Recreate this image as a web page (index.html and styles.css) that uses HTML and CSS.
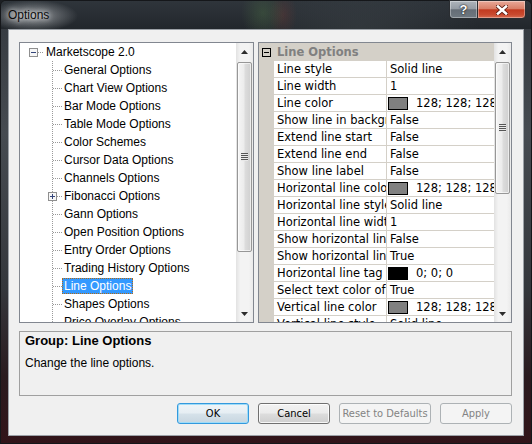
FILE: index.html
```html
<!DOCTYPE html>
<html>
<head>
<meta charset="utf-8">
<title>Options</title>
<link rel="stylesheet" href="styles.css">
</head>
<body>
<div class="window">
  <div class="titlebar">
    <span class="title">Options</span>
    <div class="caption-btns">
      <span class="cap help">?</span>
      <span class="cap close"><svg width="12" height="10" viewBox="0 0 12 10"><path d="M2 1.5L10 8.5M10 1.5L2 8.5" stroke="#5a1a10" stroke-width="4.2" stroke-linecap="square"/><path d="M2 1.5L10 8.5M10 1.5L2 8.5" stroke="#ffffff" stroke-width="2.6" stroke-linecap="square"/></svg></span>
    </div>
  </div>
  <div class="client">
    <div class="panels">
      <div class="tree">
        <div class="tree-body">
          <div class="node root"><svg class="exp" width="9" height="9" viewBox="0 0 9 9"><rect x="0.5" y="0.5" width="8" height="8" fill="#f6f6f6" stroke="#8f8f8f"/><path d="M2 4.5h5" stroke="#34457a"/></svg><span class="conn root-conn"></span><span class="label">Marketscope 2.0</span></div>
          <div class="children">
            <div class="node child"><span class="conn"></span><span class="label">General Options</span></div>
            <div class="node child"><span class="conn"></span><span class="label">Chart View Options</span></div>
            <div class="node child"><span class="conn"></span><span class="label">Bar Mode Options</span></div>
            <div class="node child"><span class="conn"></span><span class="label">Table Mode Options</span></div>
            <div class="node child"><span class="conn"></span><span class="label">Color Schemes</span></div>
            <div class="node child"><span class="conn"></span><span class="label">Cursor Data Options</span></div>
            <div class="node child"><span class="conn"></span><span class="label">Channels Options</span></div>
            <div class="node child"><svg class="exp exp-child" width="9" height="9" viewBox="0 0 9 9"><rect x="0.5" y="0.5" width="8" height="8" fill="#f6f6f6" stroke="#8f8f8f"/><path d="M2 4.5h5M4.5 2v5" stroke="#34457a"/></svg><span class="conn short"></span><span class="label">Fibonacci Options</span></div>
            <div class="node child"><span class="conn"></span><span class="label">Gann Options</span></div>
            <div class="node child"><span class="conn"></span><span class="label">Open Position Options</span></div>
            <div class="node child"><span class="conn"></span><span class="label">Entry Order Options</span></div>
            <div class="node child"><span class="conn"></span><span class="label">Trading History Options</span></div>
            <div class="node child"><span class="conn"></span><span class="label selected">Line Options</span></div>
            <div class="node child"><span class="conn"></span><span class="label">Shapes Options</span></div>
            <div class="node child"><span class="conn"></span><span class="label">Price Overlay Options</span></div>
          </div>
        </div>
        <div class="vscroll">
          <div class="arrow"><svg width="7" height="4" viewBox="0 0 7 4"><path d="M3.5 0L7 4H0z" fill="#2c2c2c"/></svg></div>
          <div class="track">
            <div class="thumb tree-thumb"><span class="grip"></span></div>
          </div>
          <div class="arrow"><svg width="7" height="4" viewBox="0 0 7 4"><path d="M0 0H7L3.5 4z" fill="#2c2c2c"/></svg></div>
        </div>
      </div>
      <div class="grid">
        <div class="grid-body">
          <div class="cat">
            <span class="gut"><svg width="9" height="9" viewBox="0 0 9 9"><rect x="0.5" y="0.5" width="8" height="8" fill="none" stroke="#000"/><path d="M2 4.5h5" stroke="#000"/></svg></span>
            <span class="cat-label">Line Options</span>
          </div>
          <div class="prow"><span class="gut"></span><span class="pname">Line style</span><span class="pval">Solid line</span></div>
          <div class="prow"><span class="gut"></span><span class="pname">Line width</span><span class="pval">1</span></div>
          <div class="prow"><span class="gut"></span><span class="pname">Line color</span><span class="pval"><span class="swatch gray"></span><span class="vtext">128; 128; 128</span></span></div>
          <div class="prow"><span class="gut"></span><span class="pname">Show line in background</span><span class="pval">False</span></div>
          <div class="prow"><span class="gut"></span><span class="pname">Extend line start</span><span class="pval">False</span></div>
          <div class="prow"><span class="gut"></span><span class="pname">Extend line end</span><span class="pval">False</span></div>
          <div class="prow"><span class="gut"></span><span class="pname">Show line label</span><span class="pval">False</span></div>
          <div class="prow"><span class="gut"></span><span class="pname">Horizontal line color</span><span class="pval"><span class="swatch gray"></span><span class="vtext">128; 128; 128</span></span></div>
          <div class="prow"><span class="gut"></span><span class="pname">Horizontal line style</span><span class="pval">Solid line</span></div>
          <div class="prow"><span class="gut"></span><span class="pname">Horizontal line width</span><span class="pval">1</span></div>
          <div class="prow"><span class="gut"></span><span class="pname">Show horizontal line label</span><span class="pval">False</span></div>
          <div class="prow"><span class="gut"></span><span class="pname">Show horizontal line tag</span><span class="pval">True</span></div>
          <div class="prow"><span class="gut"></span><span class="pname">Horizontal line tag font color</span><span class="pval"><span class="swatch black"></span><span class="vtext">0; 0; 0</span></span></div>
          <div class="prow"><span class="gut"></span><span class="pname">Select text color of tag</span><span class="pval">True</span></div>
          <div class="prow"><span class="gut"></span><span class="pname">Vertical line color</span><span class="pval"><span class="swatch gray"></span><span class="vtext">128; 128; 128</span></span></div>
          <div class="prow"><span class="gut"></span><span class="pname">Vertical line style</span><span class="pval">Solid line</span></div>
        </div>
        <div class="vscroll">
          <div class="arrow"><svg width="7" height="4" viewBox="0 0 7 4"><path d="M3.5 0L7 4H0z" fill="#2c2c2c"/></svg></div>
          <div class="track">
            <div class="thumb grid-thumb"><span class="grip"></span></div>
          </div>
          <div class="arrow"><svg width="7" height="4" viewBox="0 0 7 4"><path d="M0 0H7L3.5 4z" fill="#2c2c2c"/></svg></div>
        </div>
      </div>
    </div>
    <div class="desc">
      <div class="desc-title">Group: Line Options</div>
      <div class="desc-text">Change the line options.</div>
    </div>
    <div class="buttons">
      <button class="btn default">OK</button>
      <button class="btn">Cancel</button>
      <button class="btn wide" disabled>Reset to Defaults</button>
      <button class="btn" disabled>Apply</button>
    </div>
  </div>
</div>
</body>
</html>
```
FILE: styles.css
```css
* { box-sizing: border-box; }
html, body { margin: 0; padding: 0; }
body {
  width: 532px;
  height: 444px;
  overflow: hidden;
  background: #1c1f23;
  font-family: "Liberation Sans", Arial, sans-serif;
}
.window {
  width: 532px;
  height: 444px;
  display: flex;
  flex-direction: column;
  border: 1px solid #15171a;
  border-radius: 6px 6px 0 0;
  background: linear-gradient(to bottom, #33383e 0%, #464b51 30%, #34373c 65%, #2a1b1f 85%, #321419 100%);
}
.titlebar {
  height: 28px;
  flex: none;
  display: flex;
  justify-content: space-between;
  align-items: flex-start;
  border-radius: 5px 5px 0 0;
  background:
    radial-gradient(ellipse 45px 16px at 32px 15px, rgba(235,238,240,0.55), rgba(235,238,240,0) 100%),
    radial-gradient(ellipse 22px 26px at 262px 12px, rgba(80,120,70,0.35), rgba(80,120,70,0) 100%),
    radial-gradient(ellipse 14px 24px at 282px 14px, rgba(140,60,50,0.25), rgba(140,60,50,0) 100%),
    radial-gradient(ellipse 120px 40px at 360px 30px, rgba(120,130,130,0.18), rgba(120,130,130,0) 100%),
    linear-gradient(to bottom, #2f353b 0%, #22272c 100%);
}
.title {
  padding: 7px 0 0 7px;
  font-size: 12px;
  line-height: 14px;
  color: #0b0b0b;
  text-shadow: 0 0 5px rgba(255,255,255,0.9), 0 0 9px rgba(255,255,255,0.6);
}
.caption-btns {
  display: flex;
  margin-right: 5px;
  margin-top: -1px;
}
.cap {
  height: 19px;
  display: flex;
  align-items: center;
  justify-content: center;
  border: 1px solid #2a2d31;
  box-shadow: inset 0 0 0 1px rgba(255,255,255,0.35);
}
.help {
  width: 28px;
  border-right: none;
  border-radius: 0 0 0 4px;
  background: linear-gradient(to bottom, #aeb4bb 0%, #959ca4 45%, #656d76 52%, #6f7880 100%);
  color: #fff;
  font-weight: bold;
  font-size: 13px;
  text-shadow: 0 0 2px #1a1a1a, 0 0 1px #000;
}
.close {
  width: 49px;
  border-radius: 0 0 4px 0;
  background: linear-gradient(to bottom, #e9a999 0%, #d97f68 45%, #c23a20 52%, #c94a2f 80%, #d66b50 100%);
}
.close svg { display: block; }

.client {
  flex: 1;
  margin: 0 7px 7px 7px;
  border: 1px solid #9ca1a7;
  background: #f0f0f0;
  padding: 12px 11px 11px 10px;
  display: flex;
  flex-direction: column;
}
.panels {
  height: 281px;
  flex: none;
  display: flex;
  gap: 4px;
}

/* tree */
.tree {
  width: 235px;
  height: 281px;
  border: 1px solid #828790;
  background: #fff;
  display: flex;
}
.tree-body {
  flex: 1;
  overflow: hidden;
  font-size: 12px;
  color: #000;
}
.node {
  height: 18px;
  display: flex;
  align-items: center;
  white-space: nowrap;
}
.root { padding-left: 9px; }
.exp { display: block; flex: none; }
.exp-child { margin-left: -5px; }
.conn {
  width: 9px;
  height: 1px;
  flex: none;
  background-image: linear-gradient(to right, #9a9a9a 50%, rgba(0,0,0,0) 50%);
  background-size: 2px 1px;
  background-repeat: repeat-x;
}
.root-conn { width: 6px; }
.conn.short { width: 5px; }
.children {
  background-image: linear-gradient(to bottom, #9a9a9a 50%, rgba(0,0,0,0) 50%);
  background-size: 1px 2px;
  background-repeat: repeat-y;
  background-position: 32px 0;
}
.child { padding-left: 33px; }
.label {
  height: 16px;
  line-height: 16px;
  padding: 0 2px;
}
.label.selected {
  background: #3399ff;
  color: #fff;
  border: 1px dotted #b36a14;
  line-height: 14px;
  padding: 0 1px;
}

/* scrollbars */
.vscroll {
  width: 17px;
  flex: none;
  display: flex;
  flex-direction: column;
  background: linear-gradient(to right, #e2e2e2 0%, #f3f3f3 25%, #f3f3f3 75%, #eaeaea 100%);
}
.arrow {
  height: 17px;
  flex: none;
  display: flex;
  align-items: center;
  justify-content: center;
}
.arrow svg { display: block; }
.track {
  flex: 1;
  padding: 2px 1px 0 1px;
}
.thumb {
  border: 1px solid #979797;
  border-radius: 2px;
  background: linear-gradient(to right, #f5f5f5 0%, #ececec 45%, #dcdcdc 55%, #cfcfcf 100%);
  box-shadow: inset 0 0 0 1px rgba(255,255,255,0.6);
  display: flex;
  align-items: center;
  justify-content: center;
}
.tree-thumb { height: 190px; }
.grid-thumb { height: 132px; }
.grip {
  width: 7px;
  height: 8px;
  background: repeating-linear-gradient(to bottom, #555 0 1px, #e9e9e9 1px 2px);
}

/* property grid */
.grid {
  width: 254px;
  height: 281px;
  border: 1px solid #828790;
  background: #d4d0c8;
  display: flex;
}
.grid-body {
  width: 235px;
  flex: none;
  overflow: hidden;
  font-family: "DejaVu Sans", Verdana, sans-serif;
  font-size: 11.5px;
  color: #000;
}
.cat {
  height: 18px;
  display: flex;
  align-items: center;
  background: #d4d0c8;
}
.gut {
  width: 15px;
  flex: none;
  align-self: stretch;
  background: #d4d0c8;
  display: flex;
  align-items: center;
  padding-left: 3px;
}
.gut svg { display: block; }
.cat-label {
  padding-left: 3px;
  font-weight: bold;
  color: #808080;
  white-space: nowrap;
}
.prow {
  height: 17px;
  display: flex;
}
.pname, .pval {
  height: 17px;
  line-height: 16px;
  background: #fff;
  border-bottom: 1px solid #d4d0c8;
  white-space: nowrap;
  overflow: hidden;
  text-overflow: clip;
  padding-left: 3px;
}
.pname {
  width: 113px;
  flex: none;
  border-right: 1px solid #d4d0c8;
}
.pval {
  width: 107px;
  flex: none;
  display: flex;
  align-items: center;
}
.vtext { white-space: nowrap; }
.swatch {
  width: 20px;
  height: 13px;
  flex: none;
  margin-left: -2px;
  margin-right: 8px;
  border: 1px solid #000;
}
.swatch.gray { background: #808080; }
.swatch.black { background: #000; }

/* description */
.desc {
  margin-top: 8px;
  height: 65px;
  flex: none;
  border: 1px solid #a0a0a0;
  background: #f0f0f0;
  padding: 1px 5px;
  color: #000;
}
.desc-title {
  font-weight: bold;
  font-size: 13px;
  line-height: 16px;
}
.desc-text {
  margin-top: 6px;
  font-size: 12px;
  line-height: 16px;
}

/* buttons */
.buttons {
  margin-top: 7px;
  display: flex;
  justify-content: flex-end;
  gap: 9px;
}
.btn {
  width: 72px;
  height: 21px;
  padding: 0;
  margin: 0;
  white-space: nowrap;
  font-family: "DejaVu Sans Condensed", "Liberation Sans", Arial, sans-serif;
  font-size: 11px;
  color: #000;
  border: 1px solid #707070;
  border-radius: 3px;
  background: linear-gradient(to bottom, #f2f2f2 0%, #ebebeb 49%, #dddddd 51%, #cfcfcf 100%);
  box-shadow: inset 0 0 0 1px rgba(255,255,255,0.8);
}
.btn.wide { width: 92px; }
.btn.default {
  border-color: #3399dd;
  box-shadow: inset 0 0 0 1px #9fdcf8;
  background: linear-gradient(to bottom, #eef4f8 0%, #e6eef3 49%, #d6e2ea 51%, #c8d6e0 100%);
}
.btn:disabled {
  color: #838383;
  border-color: #adb2b5;
  background: #f4f4f4;
  box-shadow: none;
}
```
